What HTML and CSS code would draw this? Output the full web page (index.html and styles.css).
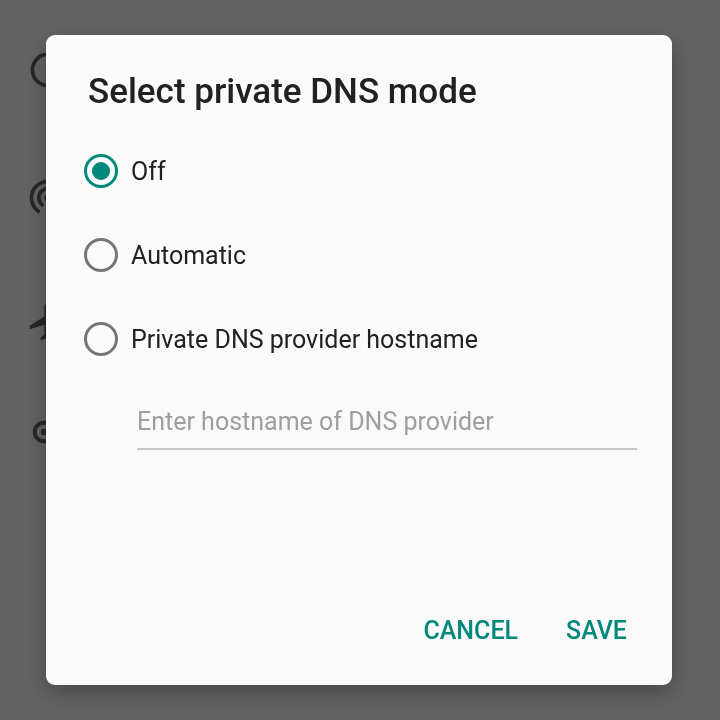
FILE: index.html
```html
<!DOCTYPE html>
<html lang="en">
<head>
    <meta charset="UTF-8">
    <meta name="viewport" content="width=device-width, initial-scale=1.0">
    <title>Private DNS</title>
    <link rel="stylesheet" href="styles.css">
</head>
<body>

    <!-- Settings list behind the dialog -->
    <div class="settings">
        <div class="setting-row">
            <svg class="setting-icon" viewBox="0 0 24 24"><circle cx="12" cy="12" r="8.5" fill="none" stroke="#5f6368" stroke-width="2"/></svg>
        </div>
        <div class="setting-row">
            <svg class="setting-icon" viewBox="0 0 24 24"><path fill="#5f6368" d="M12 11c-1.1 0-2 .9-2 2s.9 2 2 2 2-.9 2-2-.9-2-2-2zm6 2c0-3.31-2.690-6-6-6s-6 2.69-6 6c0 2.22 1.21 4.15 3 5.19l1-1.74c-1.190-.7-2-1.970-2-3.45 0-2.21 1.79-4 4-4s4 1.79 4 4c0 1.48-.81 2.75-2 3.45l1 1.740c1.79-1.04 3-2.97 3-5.19zM12 3C6.48 3 2 7.48 2 13c0 3.7 2.01 6.92 4.99 8.65l1-1.73C5.61 18.53 4 15.96 4 13c0-4.42 3.58-8 8-8s8 3.58 8 8c0 2.96-1.61 5.53-4 6.92l1 1.73c2.99-1.73 5-4.95 5-8.650 0-5.52-4.48-10-10-10z"/></svg>
        </div>
        <div class="setting-row">
            <svg class="setting-icon" viewBox="0 0 24 24"><path fill="#5f6368" d="M21 16v-2l-8-5V3.5c0-.83-.67-1.5-1.5-1.5S10 2.67 10 3.5V9l-8 5v2l8-2.5V19l-2 1.5V22l3.5-1 3.5 1v-1.5L13 19v-5.5l8 2.5z"/></svg>
        </div>
        <div class="setting-row last">
            <svg class="setting-icon small" viewBox="0 0 24 24"><circle cx="12" cy="12" r="7" fill="none" stroke="#5f6368" stroke-width="3"/><circle cx="12" cy="12" r="2.5" fill="#5f6368"/></svg>
        </div>
    </div>

    <!-- Dialog -->
    <div class="scrim">
        <div class="dialog">
            <h2 class="dialog-title">Select private DNS mode</h2>

            <div class="options">
                <label class="option">
                    <span class="radio checked"></span>
                    <span class="option-label">Off</span>
                </label>
                <label class="option">
                    <span class="radio"></span>
                    <span class="option-label">Automatic</span>
                </label>
                <label class="option">
                    <span class="radio"></span>
                    <span class="option-label">Private DNS provider hostname</span>
                </label>
            </div>

            <input class="hostname" type="text" placeholder="Enter hostname of DNS provider">

            <div class="actions">
                <button class="action">CANCEL</button>
                <button class="action">SAVE</button>
            </div>
        </div>
    </div>

</body>
</html>
```

FILE: styles.css
```css
body {
    margin: 0;
    padding: 0;
    width: 720px;
    height: 720px;
    overflow: hidden;
    background-color: #ffffff;
    font-family: Roboto, "Noto Sans", sans-serif;
}

/* Settings list under the scrim */
.settings {
    display: flex;
    flex-direction: column;
    gap: 78px;
    padding: 46px 0 0 26px;
}

.setting-row {
    height: 48px;
    display: flex;
    align-items: center;
}

.setting-row.last {
    margin-top: -16px;
}

.setting-icon {
    width: 44px;
    height: 44px;
}

.setting-icon.small {
    width: 32px;
    height: 32px;
    margin-left: 2px;
}

.scrim {
    position: fixed;
    inset: 0;
    background-color: rgba(0, 0, 0, 0.61);
    display: flex;
    align-items: center;
    justify-content: center;
}

.dialog {
    width: 626px;
    height: 650px;
    box-sizing: border-box;
    background-color: #fafafa;
    border-radius: 9px;
    box-shadow: 0 8px 24px rgba(0, 0, 0, 0.3);
    display: flex;
    flex-direction: column;
    padding: 37px 35px 27px 0;
    margin-left: -2px;
}

.dialog-title {
    margin: 0 0 0 42px;
    font-size: 35px;
    line-height: 40px;
    font-weight: 500;
    color: #212121;
}

.options {
    display: flex;
    flex-direction: column;
    margin-top: 17px;
}

.option {
    height: 84px;
    display: flex;
    align-items: center;
    gap: 13px;
    padding-left: 38px;
}

.radio {
    width: 34px;
    height: 34px;
    box-sizing: border-box;
    border: 3px solid #757575;
    border-radius: 50%;
    display: flex;
    align-items: center;
    justify-content: center;
}

.radio.checked {
    border-color: #00897b;
}

.radio.checked::after {
    content: "";
    width: 18px;
    height: 18px;
    border-radius: 50%;
    background-color: #00897b;
}

.option-label {
    font-size: 25px;
    color: #212121;
}

.hostname {
    margin: 26px 0 0 91px;
    padding: 0 0 11px 0;
    border: none;
    border-bottom: 2px solid #c6c6c6;
    background: transparent;
    font-family: Roboto, "Noto Sans", sans-serif;
    font-size: 25px;
    line-height: 30px;
    height: 30px;
    color: #212121;
    outline: none;
}

.hostname::placeholder {
    color: #9e9e9e;
}

.actions {
    margin-top: auto;
    margin-right: -2px;
    display: flex;
    justify-content: flex-end;
    gap: 24px;
}

.action {
    background: none;
    border: none;
    padding: 12px;
    font-family: Roboto, "Noto Sans", sans-serif;
    font-size: 25px;
    line-height: 30px;
    font-weight: 500;
    color: #00897b;
    cursor: pointer;
}
```
